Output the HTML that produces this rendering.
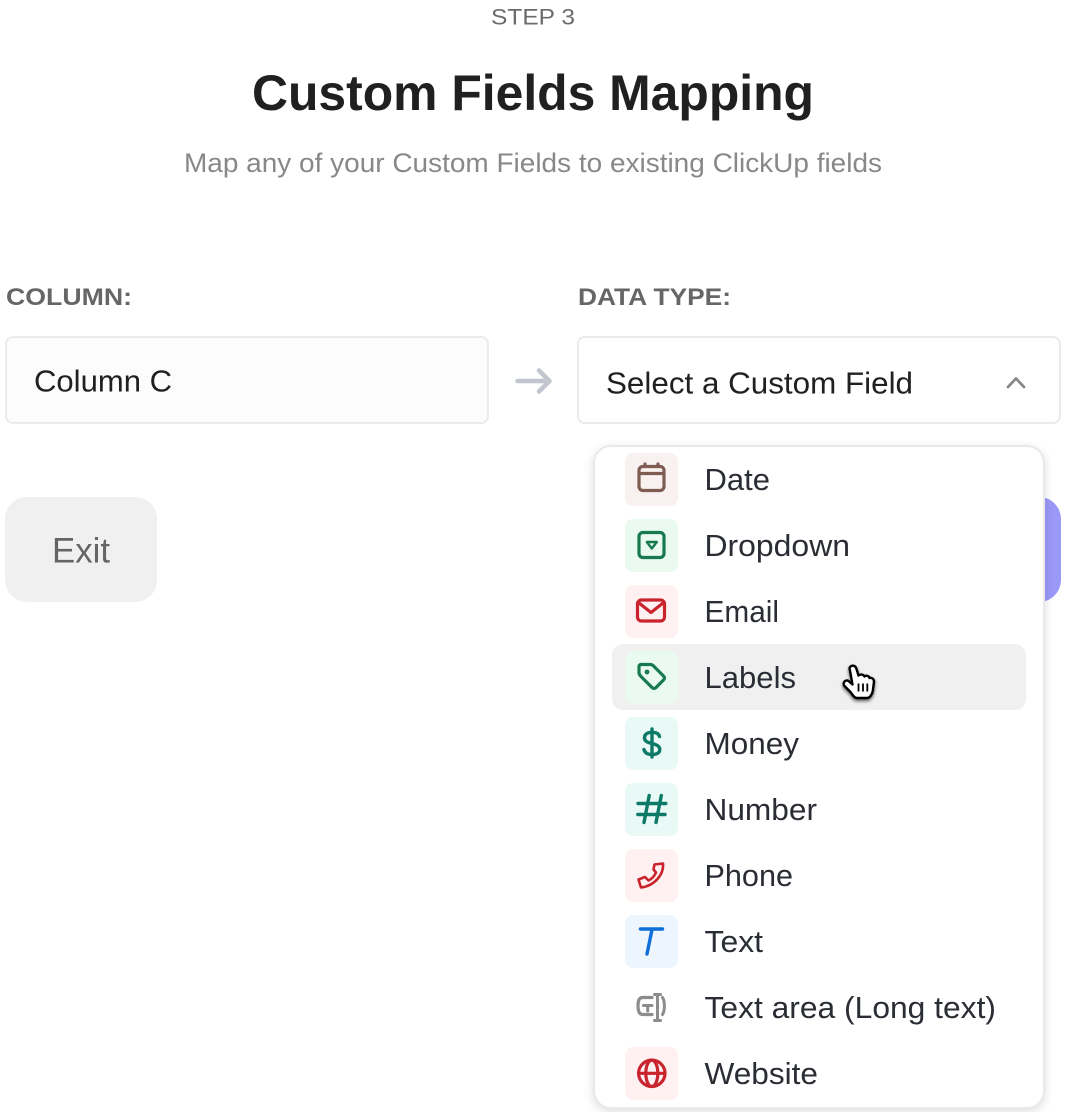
<!DOCTYPE html>
<html lang="en">
<head>
<meta charset="utf-8">
<title>Custom Fields Mapping</title>
<style>
html,body{margin:0;padding:0;background:#fff;width:1066px;height:1112px;overflow:hidden}
.a{position:absolute;box-sizing:border-box}
svg{position:absolute;left:0;top:0}
text{font-family:"Liberation Sans",sans-serif}
.i{font-size:30.5px;fill:#2a2e34}
.ic{fill:none;stroke-width:3.2;stroke-linecap:round;stroke-linejoin:round}
</style>
</head>
<body>
<div class="a" style="left:5px;top:336px;width:484px;height:88px;background:#fcfcfc;border:2px solid #e9ebed;border-radius:8px"></div>
<div class="a" style="left:577px;top:336px;width:484px;height:88px;background:#fff;border:2px solid #e9ebed;border-radius:8px"></div>
<div class="a" style="left:5px;top:497px;width:152px;height:105px;background:#f0f0f0;border-radius:22px"></div>
<div class="a" style="left:940px;top:497px;width:121px;height:105px;background:#9b99f8;border-radius:22px"></div>
<div class="a" style="left:592.500px;top:444.500px;width:452px;height:664px;background:#fff;border:2px solid #e9e9e9;border-radius:18px;box-shadow:0 3px 10px rgba(0,0,0,.13)"></div>
<div class="a" style="left:612px;top:644px;width:414px;height:66px;background:#f0f0f0;border-radius:11px"></div>

<svg width="1066" height="1112" viewBox="0 0 1066 1112">
  <text x="491" y="24.500" font-size="22.500" fill="#6b6b6b" textLength="84" lengthAdjust="spacingAndGlyphs">STEP 3</text>
  <text x="252" y="110" font-size="50" font-weight="700" fill="#202020" textLength="562" lengthAdjust="spacingAndGlyphs">Custom Fields Mapping</text>
  <text x="184" y="172" font-size="26.500" fill="#87888a" textLength="698" lengthAdjust="spacingAndGlyphs">Map any of your Custom Fields to existing ClickUp fields</text>
  <text x="6" y="305" font-size="24" font-weight="700" fill="#666" textLength="126" lengthAdjust="spacingAndGlyphs">COLUMN:</text>
  <text x="578" y="305" font-size="24" font-weight="700" fill="#666" textLength="153" lengthAdjust="spacingAndGlyphs">DATA TYPE:</text>
  <text x="34" y="391.500" font-size="31" fill="#202020" textLength="138" lengthAdjust="spacingAndGlyphs">Column C</text>
  <text x="606" y="393.500" font-size="31" fill="#202020" textLength="307" lengthAdjust="spacingAndGlyphs">Select a Custom Field</text>
  <text x="52" y="562.500" font-size="35" fill="#656565" textLength="58" lengthAdjust="spacingAndGlyphs">Exit</text>

  <path d="M517.500 381H549M539 370.500L549.500 381L539 391.500" fill="none" stroke="#c0c5ce" stroke-width="4.500" stroke-linecap="round" stroke-linejoin="round"/>
  <path d="M1008 387L1016 378.500L1024 387" fill="none" stroke="#8a8a8a" stroke-width="2.800" stroke-linecap="round" stroke-linejoin="round"/>

  <text class="i" x="704.500" y="490" textLength="65.500" lengthAdjust="spacingAndGlyphs">Date</text>
  <text class="i" x="704.500" y="556" textLength="145.500" lengthAdjust="spacingAndGlyphs">Dropdown</text>
  <text class="i" x="704.500" y="622" textLength="74.500" lengthAdjust="spacingAndGlyphs">Email</text>
  <text class="i" x="704.500" y="688" textLength="91.500" lengthAdjust="spacingAndGlyphs">Labels</text>
  <text class="i" x="704.500" y="754" textLength="94.500" lengthAdjust="spacingAndGlyphs">Money</text>
  <text class="i" x="704.500" y="820" textLength="112.500" lengthAdjust="spacingAndGlyphs">Number</text>
  <text class="i" x="704.500" y="886" textLength="88.500" lengthAdjust="spacingAndGlyphs">Phone</text>
  <text class="i" x="704.500" y="952" textLength="58.500" lengthAdjust="spacingAndGlyphs">Text</text>
  <text class="i" x="704.500" y="1018" textLength="291.500" lengthAdjust="spacingAndGlyphs">Text area (Long text)</text>
  <text class="i" x="704.500" y="1084" textLength="113.500" lengthAdjust="spacingAndGlyphs">Website</text>

  <!-- Date -->
  <g transform="translate(625 453)">
    <rect width="53" height="53" rx="8" fill="#f9f1f0"/>
    <g class="ic" stroke="#7e5c52">
      <rect x="14" y="13.500" width="25" height="24" rx="4"/>
      <path d="M14 20.500H39M20 11V13.500M33 11V13.500"/>
    </g>
  </g>
  <!-- Dropdown -->
  <g transform="translate(625 519)">
    <rect width="53" height="53" rx="8" fill="#eafaf1"/>
    <g class="ic" stroke="#177a4f">
      <rect x="14" y="13.500" width="25" height="25" rx="4"/>
      <path d="M21.800 23H31.800L26.800 29.500Z" style="stroke-width:2.400"/>
    </g>
  </g>
  <!-- Email -->
  <g transform="translate(625 585)">
    <rect width="53" height="53" rx="8" fill="#fff0f1"/>
    <g class="ic" stroke="#c9242d">
      <rect x="12.500" y="15" width="27" height="21" rx="4"/>
      <path d="M14 18L26 27.500L38 18"/>
    </g>
  </g>
  <!-- Labels -->
  <g transform="translate(625 651)">
    <rect width="53" height="53" rx="8" fill="#eafaf1"/>
    <path class="ic" stroke="#177a4f" d="M16 13.500H25.500C26.500 13.500 27.500 14 28 14.500L38.500 25C39.800 26.300 39.800 27.800 38.500 29L31 36.500C29.800 37.800 28.200 37.800 27 36.500L16.500 26C15 24.500 14 23.500 14 22V15.500C14 14.300 14.800 13.500 16 13.500Z"/>
    <circle cx="22" cy="21" r="2.400" fill="#177a4f"/>
  </g>
  <!-- Money -->
  <g transform="translate(625 717)">
    <rect width="53" height="53" rx="8" fill="#e9faf6"/>
    <path class="ic" stroke="#0d7a68" d="M34.500 19.500C33.800 16.500 31 15.300 27 15.300C22 15.300 19.500 17.500 19.500 20.800C19.500 24.500 22.800 25.500 27 26.500C31.500 27.500 34.800 29 34.800 32.500C34.800 36 31.500 37.500 27 37.500C22.500 37.500 19.800 36 19 32.500M27 12V40" style="stroke-width:3.400"/>
  </g>
  <!-- Number -->
  <g transform="translate(625 783)">
    <rect width="53" height="53" rx="8" fill="#e9faf6"/>
    <path class="ic" stroke="#0d7a68" style="stroke-width:3.400" d="M13 20.500H40.800M12.800 31.500H40M24.200 12.500L19 39.500M36.300 12.500L31 39.500"/>
  </g>
  <!-- Phone -->
  <g transform="translate(625 849)">
    <rect width="53" height="53" rx="8" fill="#fff0f1"/>
    <path class="ic" stroke="#c9242d" style="stroke-width:2.600" d="M29.500 15.500L38 14.500C39 26 29 37 16 38.500L13.500 30.500L20 28L23.500 31.500C26.500 30 29.500 27 31 23.500L28.500 20.500Z"/>
  </g>
  <!-- Text -->
  <g transform="translate(625 915)">
    <rect width="53" height="53" rx="8" fill="#edf6fe"/>
    <path class="ic" stroke="#0f6fd8" style="stroke-width:3.400" d="M15.500 14H37.500M27 14.500L22 39"/>
  </g>
  <!-- Text area -->
  <g transform="translate(625 981)">
    <g class="ic" stroke="#8c8c8c">
      <path d="M27 16.500H17.500C14.500 16.500 13 19 13 24.500C13 30.500 14.500 33.500 17.500 33.500H27"/>
      <path d="M18.500 24.500H27M22.700 24.500V30M32.500 14V39.500M29.500 13.500H35.500M29.500 39.500H35.500M37.500 16.500C40 20 40 30 37.500 33.500" style="stroke-width:3"/>
    </g>
  </g>
  <!-- Website -->
  <g transform="translate(625 1047)">
    <rect width="53" height="53" rx="8" fill="#fff0f1"/>
    <g class="ic" stroke="#c9242d">
      <circle cx="26.800" cy="26.300" r="13.200"/>
      <ellipse cx="26.800" cy="26.300" rx="6" ry="13.200"/>
      <path d="M13.600 26.300H40"/>
    </g>
  </g>
  <!-- Cursor -->
  <g transform="translate(-1 -1)" style="filter:drop-shadow(0 2px 1.500px rgba(0,0,0,.6))">
    <path d="M850.500 669C852 665.500 856.500 666 857.500 670L859.500 676.500C861.500 674.800 864.500 675.500 865.500 677.500C867.500 676 870 676.800 870.500 679C872.800 678.300 875 680 875 682.500L873.800 692C873 696 870.500 699 868 699H858C855.500 699 853.500 696 851.500 693L845.500 687C843 684 846.500 680 849.500 682L853.500 685.500Z" fill="#fff" stroke="#000" stroke-width="2.400" stroke-linejoin="round"/>
    <path d="M859.500 684.500V692.500M864 684.500V692.500M868.300 684.500V692.500" stroke="#000" stroke-width="1.800" fill="none"/>
  </g>
</svg>
</body>
</html>
